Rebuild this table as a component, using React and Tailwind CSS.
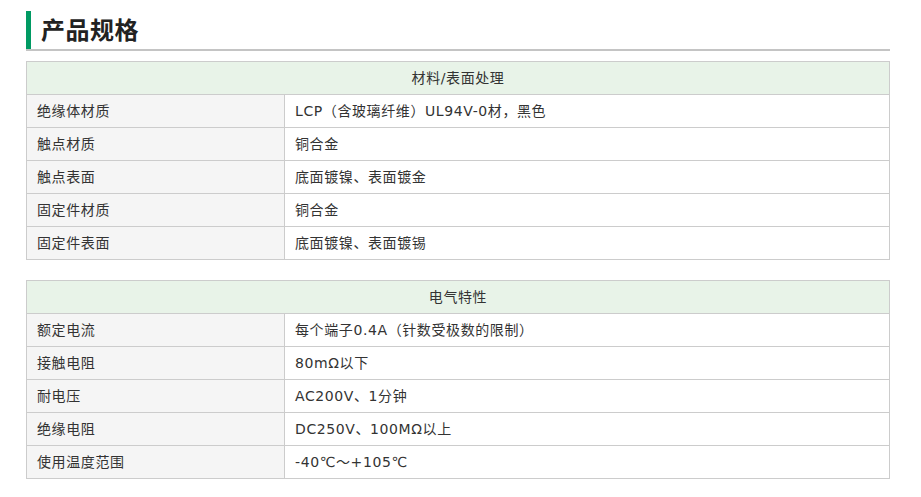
const materials = [
  ['绝缘体材质', 'LCP（含玻璃纤维）UL94V-0材，黑色'],
  ['触点材质', '铜合金'],
  ['触点表面', '底面镀镍、表面镀金'],
  ['固定件材质', '铜合金'],
  ['固定件表面', '底面镀镍、表面镀锡'],
];

const electrical = [
  ['额定电流', '每个端子0.4A（针数受极数的限制）'],
  ['接触电阻', '80mΩ以下'],
  ['耐电压', 'AC200V、1分钟'],
  ['绝缘电阻', 'DC250V、100MΩ以上'],
  ['使用温度范围', '-40℃～+105℃'],
];

function SpecTable({ title, rows }) {
  return (
    <table
      className="w-[864px] border-collapse border border-[#cccccc] text-[14px] text-[#333333] tracking-[0.6px]"
      style={{ fontFamily: '"DejaVu Sans", "Noto Sans CJK SC", sans-serif' }}
    >
      <thead>
        <tr className="h-[33px] bg-[#e8f3e8]">
          <th colSpan={2} className="border border-[#cccccc] font-normal text-center">
            {title}
          </th>
        </tr>
      </thead>
      <tbody>
        {rows.map(([k, v]) => (
          <tr key={k} className="h-[33px]">
            <td className="w-[258px] border border-[#cccccc] bg-[#f5f5f5] px-[10px]">{k}</td>
            <td className="border border-[#cccccc] bg-white px-[10px]">{v}</td>
          </tr>
        ))}
      </tbody>
    </table>
  );
}

export default function App() {
  return (
    <div
      className="bg-white w-[921px] h-[497px] pl-[26px] pt-[11px]"
      style={{ fontFamily: '"Noto Sans CJK SC", "Noto Sans", sans-serif' }}
    >
      <div className="w-[864px] border-b-2 border-[#c4c4c4] flex items-stretch">
        <div className="w-[5px] bg-[#009a63] h-[38px]"></div>
        <h1 className="pl-[10px] text-[24px] leading-[36px] font-bold text-[#222222] tracking-[0.5px]">产品规格</h1>
      </div>
      <div className="mt-[10px]">
        <SpecTable title="材料/表面处理" rows={materials} />
      </div>
      <div className="mt-[20px]">
        <SpecTable title="电气特性" rows={electrical} />
      </div>
    </div>
  );
}
